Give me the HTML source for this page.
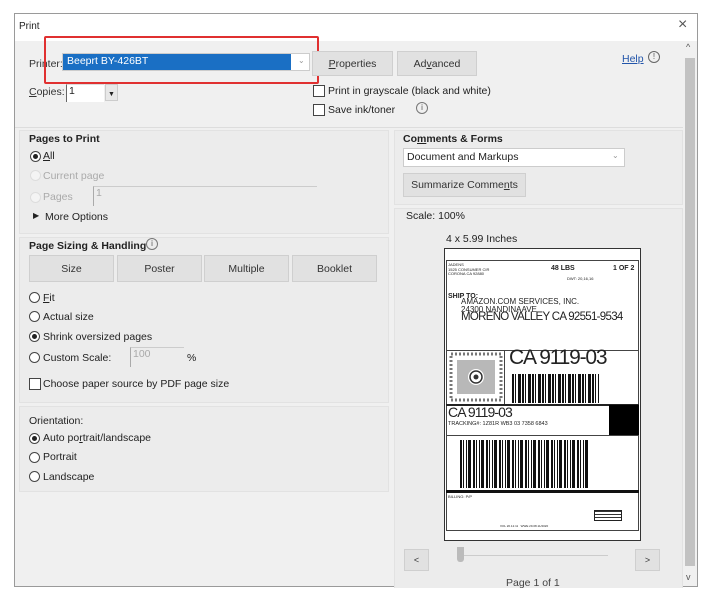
<!DOCTYPE html>
<html><head><meta charset="utf-8"><style>
*{box-sizing:border-box;margin:0;padding:0}
body{width:710px;height:596px;background:#fff;font-family:"Liberation Sans",sans-serif;font-size:10.5px;color:#222;position:relative;overflow:hidden}
.a{position:absolute}
.dlg{left:14px;top:13px;width:684px;height:574px;border:1px solid #9a9a9a;background:#fff}
.gray{left:15px;top:41px;width:668px;height:545px;background:#f0f0f0}
.panel{background:#ececec;border:1px solid #e2e2e2}
.btn{background:#e1e1e1;border:1px solid #cfcfcf;text-align:center;color:#333}
.rad{width:11px;height:11px;border:1px solid #444;border-radius:50%;background:#fff}
.rad.on::after{content:"";position:absolute;left:2px;top:2px;width:5px;height:5px;border-radius:50%;background:#222}
.rad.dis{border-color:#ddd;background:#f4f4f4}
.chk{width:12px;height:12px;border:1px solid #444;background:#fff}
.b{font-weight:bold}
.dis{color:#aaa}
</style></head><body>
<div class="a dlg"></div>
<div class="a" style="left:19px;top:21px;font-size:10px">Print</div>
<div class="a" style="left:678px;top:16px;font-size:16px;color:#555">×</div>
<div class="a gray"></div>
<div class="a" style="left:683px;top:41px;width:14px;height:545px;background:#f0f0f0"></div>
<div class="a" style="left:685px;top:58px;width:10px;height:508px;background:#c2c2c2"></div>
<div class="a" style="left:686px;top:42px;font-size:9px;color:#555">^</div>
<div class="a" style="left:686px;top:572px;font-size:9px;color:#555">v</div>

<div class="a" style="left:29px;top:58px;color:#333">Printer:</div>
<div class="a" style="left:62px;top:53px;width:248px;height:18px;background:#fff;border:1px solid #ccc"></div>
<div class="a" style="left:63px;top:54px;width:228px;height:16px;background:#1a6fc4;color:#fff;padding:1px 4px">Beeprt BY-426BT</div>
<div class="a" style="left:298px;top:56px;color:#999;font-size:8px">⌄</div>
<div class="a" style="left:44px;top:36px;width:275px;height:48px;border:2px solid #e03030;border-radius:2px"></div>
<div class="a btn" style="left:312px;top:51px;width:81px;height:25px;line-height:24px"><u>P</u>roperties</div>
<div class="a btn" style="left:397px;top:51px;width:80px;height:25px;line-height:24px">Ad<u>v</u>anced</div>
<div class="a" style="left:622px;top:53px;color:#2255aa;text-decoration:underline">Help</div>
<div class="a" style="left:648px;top:51px;width:12px;height:12px;border:1px solid #666;border-radius:50%;font-size:8px;text-align:center;line-height:10px;color:#555">!</div>
<div class="a" style="left:29px;top:86px;color:#333"><u>C</u>opies:</div>
<div class="a" style="left:66px;top:84px;width:38px;height:18px;background:#fff;border-left:1px solid #666;border-top:1px solid #ddd;padding-left:2px">1</div>
<div class="a" style="left:105px;top:84px;width:13px;height:17px;background:#e8e8e8;border:1px solid #ccc;font-size:7px;text-align:center;line-height:20px">▼</div>
<div class="a chk" style="left:313px;top:85px"></div>
<div class="a" style="left:328px;top:85px">Print in grayscale (black and white)</div>
<div class="a chk" style="left:313px;top:104px"></div>
<div class="a" style="left:328px;top:104px">Save ink/toner</div>
<div class="a" style="left:416px;top:102px;width:12px;height:12px;border:1px solid #777;border-radius:50%;font-size:8px;text-align:center;line-height:10px;color:#555">i</div>
<div class="a" style="left:15px;top:127px;width:668px;height:1px;background:#ddd"></div>

<div class="a panel" style="left:19px;top:130px;width:370px;height:104px"></div>
<div class="a b" style="left:29px;top:133px">Pages to Print</div>
<div class="a rad on" style="left:30px;top:151px"></div><div class="a" style="left:43px;top:150px"><u>A</u>ll</div>
<div class="a rad dis" style="left:30px;top:170px"></div><div class="a dis" style="left:43px;top:170px">Current page</div>
<div class="a rad dis" style="left:30px;top:192px"></div><div class="a dis" style="left:43px;top:191px">Pages</div>
<div class="a" style="left:93px;top:186px;width:224px;height:20px;border-left:1px solid #aaa;border-top:1px solid #ccc;color:#aaa;padding-left:2px">1</div>
<div class="a" style="left:33px;top:211px;font-size:8px">▶</div><div class="a" style="left:45px;top:211px">More Options</div>

<div class="a panel" style="left:19px;top:237px;width:370px;height:166px"></div>
<div class="a b" style="left:29px;top:240px">Page Sizing &amp; Handling</div>
<div class="a" style="left:146px;top:238px;width:12px;height:12px;border:1px solid #777;border-radius:50%;font-size:8px;text-align:center;line-height:10px;color:#555">i</div>
<div class="a btn" style="left:29px;top:255px;width:85px;height:27px;line-height:26px">Size</div>
<div class="a btn" style="left:117px;top:255px;width:85px;height:27px;line-height:26px">Poster</div>
<div class="a btn" style="left:204px;top:255px;width:85px;height:27px;line-height:26px">Multiple</div>
<div class="a btn" style="left:292px;top:255px;width:85px;height:27px;line-height:26px">Booklet</div>
<div class="a rad" style="left:29px;top:292px"></div><div class="a" style="left:43px;top:292px"><u>F</u>it</div>
<div class="a rad" style="left:29px;top:311px"></div><div class="a" style="left:43px;top:311px">Actual size</div>
<div class="a rad on" style="left:29px;top:331px"></div><div class="a" style="left:43px;top:331px">Shrink oversized pages</div>
<div class="a rad" style="left:29px;top:352px"></div><div class="a" style="left:43px;top:352px">Custom Scale:</div>
<div class="a" style="left:130px;top:347px;width:54px;height:20px;border-left:1px solid #aaa;border-top:1px solid #ccc;color:#aaa;padding-left:2px">100</div>
<div class="a" style="left:187px;top:352px">%</div>
<div class="a chk" style="left:29px;top:378px"></div><div class="a" style="left:43px;top:378px">Choose paper source by PDF page size</div>

<div class="a panel" style="left:19px;top:406px;width:370px;height:86px"></div>
<div class="a" style="left:29px;top:415px">Orientation:</div>
<div class="a rad on" style="left:29px;top:433px"></div><div class="a" style="left:43px;top:432px">Auto po<u>r</u>trait/landscape</div>
<div class="a rad" style="left:29px;top:452px"></div><div class="a" style="left:43px;top:451px">Portrait</div>
<div class="a rad" style="left:29px;top:471px"></div><div class="a" style="left:43px;top:471px">Landscape</div>

<div class="a panel" style="left:394px;top:130px;width:289px;height:75px"></div>
<div class="a b" style="left:403px;top:133px">Co<u>m</u>ments &amp; Forms</div>
<div class="a" style="left:403px;top:148px;width:222px;height:19px;background:#fff;border:1px solid #ccc;padding:2px 3px">Document and Markups</div>
<div class="a" style="left:612px;top:151px;color:#999;font-size:8px">⌄</div>
<div class="a btn" style="left:403px;top:173px;width:123px;height:24px;line-height:23px">Summarize Comme<u>n</u>ts</div>
<div class="a panel" style="left:394px;top:208px;width:289px;height:380px;border-bottom:none"></div>
<div class="a" style="left:406px;top:210px">Scale: 100%</div>
<div class="a" style="left:446px;top:233px">4 x 5.99 Inches</div>

<div class="a" style="left:444px;top:248px;width:197px;height:293px;background:#fff;border:1px solid #333"></div>
<div class="a" style="left:446px;top:260px;width:193px;height:271px;border:1px solid #444"></div>
<div class="a" style="left:448px;top:263px;font-size:4px;line-height:4.5px">JADENS<br>1525 CONSUMER CIR<br>CORONA CA 92880</div>
<div class="a b" style="left:551px;top:265px;font-size:7px">48 LBS</div>
<div class="a b" style="left:613px;top:265px;font-size:7px">1 OF 2</div>
<div class="a" style="left:567px;top:276px;font-size:4px">DWT: 20,16,16</div>
<div class="a b" style="left:448px;top:293px;font-size:7px">SHIP TO:</div>
<div class="a" style="left:461px;top:298px;font-size:8px;line-height:8px">AMAZON.COM SERVICES, INC.<br>24300 NANDINAAVE</div>
<div class="a" style="left:461px;top:311px;font-size:11.5px;letter-spacing:-0.7px">MORENO VALLEY CA 92551-9534</div>
<div class="a" style="left:446px;top:350px;width:193px;height:1px;background:#444"></div>
<svg class="a" style="left:449px;top:352px" width="54" height="50"><rect width="54" height="50" fill="#fff"/><g fill="#333"><rect x="2" y="2" width="50" height="46" fill="none" stroke="#777" stroke-width="3" stroke-dasharray="2 2"/><rect x="8" y="8" width="38" height="34" fill="#888" opacity=".6"/><circle cx="27" cy="25" r="8" fill="#fff"/><circle cx="27" cy="25" r="6" fill="none" stroke="#333" stroke-width="1.5"/><circle cx="27" cy="25" r="2.5" fill="#333"/></g></svg>
<div class="a" style="left:504px;top:351px;width:1px;height:54px;background:#444"></div>
<div class="a" style="left:509px;top:346px;font-size:21px;letter-spacing:-1.2px">CA 9119-03</div>
<div class="a" style="left:512px;top:374px;width:87px;height:29px;background:repeating-linear-gradient(90deg,#111 0 2px,#fff 2px 3px,#111 3px 4px,#fff 4px 6px,#111 6px 9px,#fff 9px 10px)"></div>
<div class="a" style="left:446px;top:404px;width:193px;height:2px;background:#222"></div>
<div class="a" style="left:609px;top:405px;width:30px;height:30px;background:#000"></div>
<div class="a" style="left:446px;top:435px;width:193px;height:1px;background:#444"></div>
<div class="a" style="left:448px;top:404px;font-size:14px;letter-spacing:-0.9px">CA 9119-03</div>
<div class="a" style="left:448px;top:421px;font-size:5.5px">TRACKING#: 1Z81R WB3 03 7358 6843</div>
<div class="a" style="left:460px;top:440px;width:130px;height:48px;background:repeating-linear-gradient(90deg,#111 0 2px,#fff 2px 3px,#111 3px 4px,#fff 4px 6px,#111 6px 7px,#fff 7px 8px,#111 8px 11px,#fff 11px 13px)"></div>
<div class="a" style="left:446px;top:490px;width:193px;height:3px;background:#111"></div>
<div class="a" style="left:448px;top:494px;font-size:4px">BILLING: P/P</div>
<div class="a" style="left:594px;top:510px;width:28px;height:11px;border:1px solid #222;background:repeating-linear-gradient(0deg,#fff 0 2px,#333 2px 3px)"></div>
<div class="a" style="left:500px;top:524px;font-size:3px">XOL 20.12.11 &nbsp; WWE 29.08.11/2020</div>

<div class="a btn" style="left:404px;top:549px;width:25px;height:22px;line-height:21px;font-size:9px">&lt;</div>
<div class="a btn" style="left:635px;top:549px;width:25px;height:22px;line-height:21px;font-size:9px">&gt;</div>
<div class="a" style="left:462px;top:555px;width:146px;height:1px;background:#ccc"></div>
<div class="a" style="left:457px;top:547px;width:7px;height:15px;background:#bbb;border-radius:0 0 3px 3px"></div>
<div class="a" style="left:506px;top:577px;color:#444">Page 1 of 1</div>
</body></html>
